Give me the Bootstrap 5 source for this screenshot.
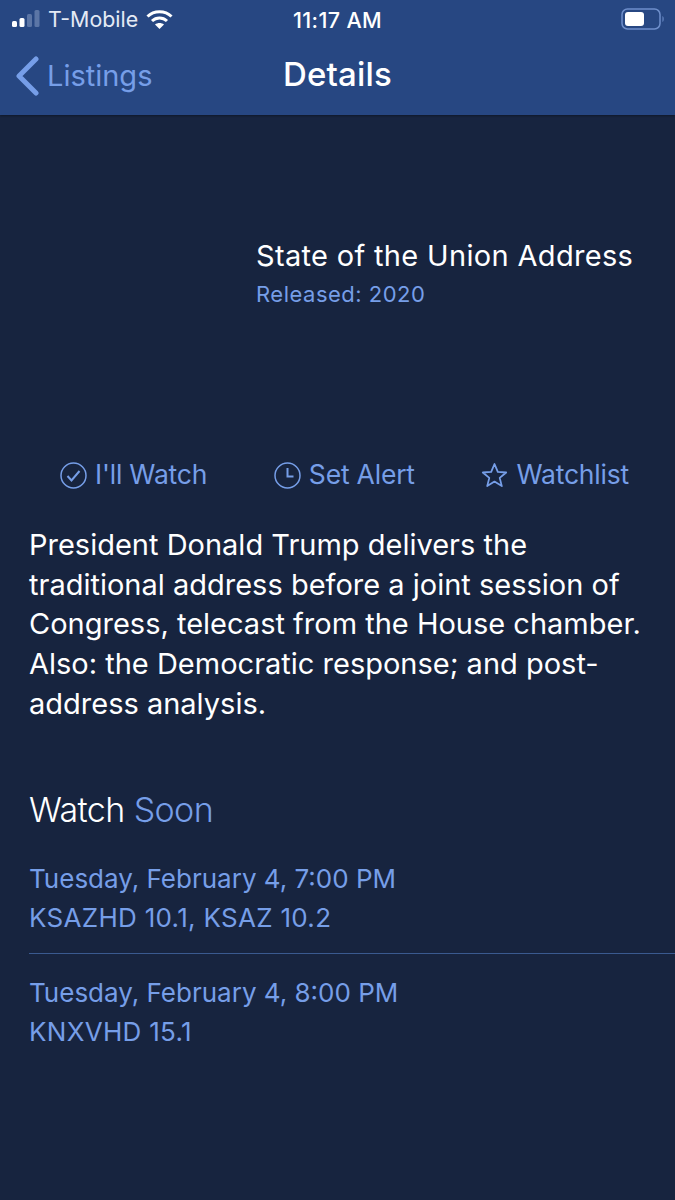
<!DOCTYPE html>
<html lang="en">
<head>
    <meta charset="UTF-8">
    <meta name="viewport" content="width=device-width, initial-scale=1.0">
    <title>Details</title>
    <link href="https://cdn.jsdelivr.net/npm/bootstrap@5.3.0/dist/css/bootstrap.min.css" rel="stylesheet">
    <style>
        body {
            background: #17243f;
            font-family: Inter, "Liberation Sans", sans-serif;
            color: #fff;
            width: 675px;
            height: 1200px;
            overflow: hidden;
        }
        .accent { color: #769ee8; }
        .top-head { background: #274782; height: 115px; box-shadow: 0 1px 2px rgba(0,0,0,.35); }
        .status-row { height: 36px; padding: 2px 10px 0 12px; position: relative; }
        .status-time { font-weight: 500; width: 100%; text-align: center; position: absolute; left: 0; top: 4px; font-size: 21.5px; letter-spacing: .35px; }
        .carrier { color: #e4eaf5; margin-left: 7px; margin-right: 8px; font-size: 21.4px; }
        .nav-row { height: 79px; padding-left: 16px; position: relative; }
        .back-text { font-size: 29px; margin-left: 8px; }
        .nav-title { position: absolute; left: 0; width: 100%; text-align: center; font-size: 33px; font-weight: 500; top: 14px; letter-spacing: .2px; }
        .hero { padding: 123px 0 0 256px; height: 330px; }
        .hero-title { font-size: 29px; line-height: 36px; letter-spacing: .33px; }
        .hero-sub { font-size: 22px; line-height: 28px; margin-top: 6px; letter-spacing: .5px; }
        .act-row { padding: 0 46px 0 60px; height: 60px; font-size: 26.5px; letter-spacing: -.2px; }
        .desc { padding: 0 29px; font-size: 29px; line-height: 39.7px; margin-top: 20px; }
        .watch-head { padding-left: 29px; font-size: 34px; line-height: 42px; margin-top: 65px; letter-spacing: -.6px; font-weight: 300; }
        .show-item { margin-left: 29px; font-size: 26px; line-height: 39px; }
        .station { letter-spacing: .3px; }
        .show-first { margin-top: 28px; padding-bottom: 16px; border-bottom: 1px solid #3a5a90; }
        .show-next { padding-top: 19px; }
    </style>
</head>
<body>
    <div class="top-head">
        <div class="status-row d-flex align-items-center">
            <svg width="29" height="20" viewBox="0 0 29 20">
                <rect x="0" y="12" width="5" height="6" rx="1.5" fill="#fff"/>
                <rect x="7.5" y="9" width="5" height="9" rx="1.5" fill="#fff"/>
                <rect x="15" y="5" width="5" height="13" rx="1.5" fill="#5c76a6"/>
                <rect x="22.5" y="1" width="5" height="17" rx="1.5" fill="#5c76a6"/>
            </svg>
            <span class="carrier">T-Mobile</span>
            <svg width="27" height="20" viewBox="0 0 27 20" fill="none" stroke="#fff" stroke-width="3">
                <path d="M1.5 7.5C8 1 19 1 25.5 7.5"/>
                <path d="M6 12c4.300-4 10.700-4 15 0"/>
                <path d="M13.500 20l-4.500-4.500c2.500-2 6.500-2 9 0z" fill="#fff" stroke="none"/>
            </svg>
            <span class="status-time">11:17 AM</span>
            <svg class="ms-auto" width="44" height="22" viewBox="0 0 44 22">
                <rect x="1" y="1" width="38" height="20" rx="5.500" fill="none" stroke="#6f8fcb" stroke-width="1.500"/>
                <rect x="4" y="4" width="19" height="14" rx="3" fill="#fff"/>
                <path d="M41.500 8c1.500.5 1.500 5.500 0 6z" fill="#6f8fcb"/>
            </svg>
        </div>
        <div class="nav-row d-flex align-items-center accent">
            <svg width="23" height="40" viewBox="0 0 23 40" fill="none" stroke="#769ee8" stroke-width="5" stroke-linecap="round" stroke-linejoin="round">
                <path d="M20 3L3 20l17 17"/>
            </svg>
            <span class="back-text">Listings</span>
            <span class="nav-title text-white">Details</span>
        </div>
    </div>

    <div class="hero">
        <div class="hero-title">State of the Union Address</div>
        <div class="hero-sub accent">Released: 2020</div>
    </div>

    <div class="act-row d-flex justify-content-between align-items-center accent">
        <span class="d-flex align-items-center gap-2">
            <svg width="27" height="27" viewBox="0 0 27 27" fill="none" stroke="#769ee8" stroke-width="1.500">
                <circle cx="13.500" cy="13.500" r="12.500"/>
                <path d="M7.500 14l4 4.500 8-9.500" stroke-width="2"/>
            </svg>
            I'll Watch
        </span>
        <span class="d-flex align-items-center gap-2">
            <svg width="27" height="27" viewBox="0 0 27 27" fill="none" stroke="#769ee8" stroke-width="1.500">
                <circle cx="13.500" cy="13.500" r="12.500"/>
                <path d="M13.500 6v8.500h6" stroke-width="2"/>
            </svg>
            Set Alert
        </span>
        <span class="d-flex align-items-center gap-2">
            <svg width="27" height="26" viewBox="0 0 27 26" fill="none" stroke="#769ee8" stroke-width="1.800" stroke-linejoin="round">
                <path d="M13.500 2l3.300 7.900 8.400.6-6.500 5.400 2.100 8.200-7.300-4.500-7.300 4.500 2.100-8.200-6.500-5.400 8.400-.6z"/>
            </svg>
            Watchlist
        </span>
    </div>

    <div class="desc">President Donald Trump delivers the traditional address before a joint session of Congress, telecast from the House chamber. Also: the Democratic response; and post-address analysis.</div>

    <div class="watch-head">Watch <span class="accent">Soon</span></div>

    <div class="show-item show-first accent">Tuesday, February 4, 7:00 PM<br><span class="station">KSAZHD 10.1, KSAZ 10.2</span></div>
    <div class="show-item show-next accent">Tuesday, February 4, 8:00 PM<br><span class="station">KNXVHD 15.1</span></div>

    <script src="https://cdn.jsdelivr.net/npm/bootstrap@5.3.0/dist/js/bootstrap.bundle.min.js"></script>
</body>
</html>
